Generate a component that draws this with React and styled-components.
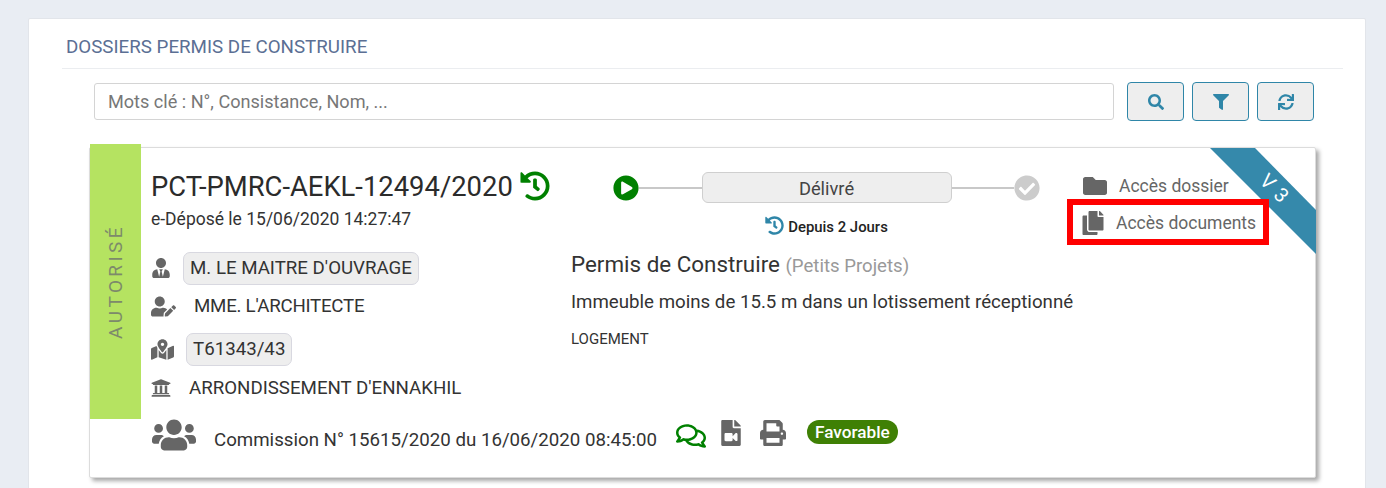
import React from 'react';
import styled, { createGlobalStyle } from 'styled-components';
import {
  FaSearch, FaFilter, FaSync, FaHistory, FaPlayCircle, FaCheckCircle, FaFolder, FaCopy,
  FaUserTie, FaUserEdit, FaMapMarkedAlt, FaUniversity, FaUsers, FaRegComments, FaFileVideo, FaPrint,
} from 'react-icons/fa';

const GlobalStyle = createGlobalStyle`
  html, body {
    margin: 0;
    height: 488px;
    overflow: hidden;
    background: #e9edf3;
    font-family: Roboto, "Liberation Sans", sans-serif;
    color: #333;
  }
`;

const Panel = styled.div`
  margin: 18px 20px 0 28px;
  height: 480px;
  background: #fff;
  border: 1px solid #e2e5ea;
  border-radius: 2px;
  box-sizing: border-box;
  padding: 0 22px 0 33px;
`;

const PanelTitle = styled.div`
  height: 50px;
  padding: 0 0 0 4px;
  line-height: 56px;
  box-sizing: border-box;
  border-bottom: 1px solid #ebedf0;
  font-size: 18.75px;
  color: #5b6f94;
`;

const SearchRow = styled.div`
  display: flex;
  align-items: center;
  margin: 13px 0 0 32px;
  height: 39px;
`;

const SearchInput = styled.input`
  width: 1020px;
  height: 37px;
  box-sizing: border-box;
  border: 1px solid #d4d4d4;
  border-radius: 3px;
  padding: 0 13px;
  margin-right: 13px;
  font: 18.1px Roboto, sans-serif;
  &::placeholder { color: #777; opacity: 1; }
`;

const IconButton = styled.button`
  width: 57px;
  height: 39px;
  margin-right: 8px;
  border: 1px solid #2f86a8;
  border-radius: 4px;
  background: #eeeeee;
  color: #2f86a8;
  font-size: 16px;
  display: flex;
  align-items: center;
  justify-content: center;
  padding: 0;
`;

const Card = styled.div`
  position: relative;
  margin: 26px 0 0 27px;
  width: 1227px;
  height: 331px;
  box-sizing: border-box;
  background: #fff;
  border: 1px solid #dcdcdc;
  border-radius: 2px;
  box-shadow: 3px 3px 4px rgba(0, 0, 0, 0.35);
`;

const CardTop = styled.div`
  display: flex;
  height: 270px;
`;

const StatusBar = styled.div`
  width: 51px;
  height: 275px;
  margin: -4px 10px 0 0;
  flex: none;
  background: #b5e361;
  color: #7d8a6b;
  font-size: 19px;
  letter-spacing: 3.4px;
  display: flex;
  align-items: center;
  justify-content: center;
  span { transform: rotate(-90deg); white-space: nowrap; }
`;

const LeftColumn = styled.div`
  width: 420px;
  flex: none;
`;

const DossierTitle = styled.div`
  display: flex;
  align-items: center;
  gap: 7px;
  margin-top: 20px;
  height: 38px;
  font-size: 27.4px;
  color: #2b2b2b;
  svg { color: #008000; font-size: 30px; margin-top: -3px; }
`;

const Deposit = styled.div`
  margin-top: 3px;
  font-size: 17.5px;
  color: #333;
`;

const InfoRow = styled.div`
  display: flex;
  align-items: center;
  height: ${p => p.$height}px;
  margin-top: ${p => p.$top || 0}px;
  font-size: 18.7px;
  letter-spacing: ${p => p.$tight ? '-0.25px' : 'normal'};
  color: #333;
`;

const InfoIcon = styled.span`
  width: ${p => p.$width}px;
  flex: none;
  display: flex;
  color: #666;
  font-size: ${p => p.$size || 20}px;
`;

const Tag = styled.span`
  padding: 5px 6px;
  line-height: 21px;
  background: #eeeeee;
  border: 1px solid #d8d8e0;
  border-radius: 7px;
`;

const RightColumn = styled.div`
  flex: 1;
`;

const RightTop = styled.div`
  display: flex;
  height: 103px;
`;

const Stepper = styled.div`
  margin: 24px 0 0 42px;
  width: 427px;
  flex: none;
`;

const StepLine = styled.div`
  display: flex;
  align-items: center;
  font-size: 26px;
  line-height: 0;
  svg { flex: none; }
`;

const Connector = styled.div`
  flex: 1;
  height: 2px;
  background: #c8c8c8;
`;

const StepBox = styled.div`
  width: 250px;
  height: 31px;
  box-sizing: border-box;
  border: 1px solid #cfcfcf;
  border-radius: 6px;
  background: #eeeeee;
  font-size: 18.3px;
  line-height: 31px;
  text-align: center;
  color: #444;
`;

const Since = styled.div`
  display: flex;
  align-items: center;
  justify-content: center;
  gap: 4px;
  margin-top: 15px;
  font-size: 14.9px;
  font-weight: 500;
  color: #222;
  svg { color: #2f86a8; font-size: 19px; margin-top: -3px; }
`;

const Links = styled.div`
  margin: 19px 0 0 43px;
`;

const AccessLink = styled.div`
  display: flex;
  align-items: center;
  height: 37px;
  font-size: 17.5px;
  color: #666;
  svg {
    flex: none;
    font-size: 24px;
    margin-left: ${p => p.$shift || 0}px;
    margin-right: ${p => p.$gap}px;
  }
`;

const Permit = styled.div`
  font-size: 22.4px;
  color: #333;
  small { font-size: 18.6px; color: #999; }
`;

const Description = styled.div`
  margin-top: 14px;
  font-size: 18.7px;
  color: #333;
`;

const Category = styled.div`
  margin-top: 17px;
  font-size: 15px;
  color: #333;
`;

const Ribbon = styled.div`
  position: absolute;
  top: 0;
  right: -1px;
  width: 106px;
  height: 106px;
  background: #3589ab;
  clip-path: polygon(0 0, 45px 0, 106px 62px, 106px 106px);
  color: #fff;
  font-size: 20px;
  span {
    position: absolute;
    left: 49px;
    top: 28px;
    transform: rotate(45deg);
    white-space: pre;
    word-spacing: 2px;
  }
`;

const Highlight = styled.div`
  position: absolute;
  left: 977px;
  top: 51px;
  width: 202px;
  height: 46px;
  box-sizing: border-box;
  border: 6px solid #ff0000;
`;

const CardFooter = styled.div`
  display: flex;
  align-items: flex-start;
  padding-left: 62px;
  height: 60px;
`;

const GroupIcon = styled.span`
  display: flex;
  font-size: 44px;
  color: #666;
  width: 62px;
  height: 34px;
  align-items: center;
`;

const CommissionText = styled.span`
  margin: 11px 19px 0 0;
  font-size: 18.7px;
  color: #333;
`;

const ActionIcon = styled.span`
  display: flex;
  font-size: ${p => p.$size}px;
  color: ${p => p.$color || '#666'};
  margin: ${p => p.$top}px ${p => p.$right}px 0 0;
`;

const Badge = styled.span`
  margin-top: 2px;
  height: 24px;
  line-height: 24px;
  padding: 0 8px;
  border-radius: 12px;
  background: #3f8005;
  color: #fff;
  font-size: 17.2px;
  font-weight: 500;
`;

export default function App() {
  return (
    <>
      <GlobalStyle />
      <Panel>
        <PanelTitle>DOSSIERS PERMIS DE CONSTRUIRE</PanelTitle>
        <SearchRow>
          <SearchInput placeholder="Mots clé : N°, Consistance, Nom, ..." />
          <IconButton><FaSearch /></IconButton>
          <IconButton><FaFilter /></IconButton>
          <IconButton><FaSync /></IconButton>
        </SearchRow>
        <Card>
          <Ribbon><span>V 3</span></Ribbon>
          <CardTop>
            <StatusBar><span>AUTORISÉ</span></StatusBar>
            <LeftColumn>
              <DossierTitle>PCT-PMRC-AEKL-12494/2020 <FaHistory /></DossierTitle>
              <Deposit>e-Déposé le 15/06/2020 14:27:47</Deposit>
              <InfoRow $height={34} $top={22}>
                <InfoIcon $width={32}><FaUserTie /></InfoIcon>
                <Tag>M. LE MAITRE D'OUVRAGE</Tag>
              </InfoRow>
              <InfoRow $height={38} $top={2} $tight>
                <InfoIcon $width={43} $size={25}><FaUserEdit /></InfoIcon>
                MME. L'ARCHITECTE
              </InfoRow>
              <InfoRow $height={34} $top={7}>
                <InfoIcon $width={35} $size={23}><FaMapMarkedAlt /></InfoIcon>
                <Tag>T61343/43</Tag>
              </InfoRow>
              <InfoRow $height={38} $top={3}>
                <InfoIcon $width={38}><FaUniversity /></InfoIcon>
                ARRONDISSEMENT D'ENNAKHIL
              </InfoRow>
            </LeftColumn>
            <RightColumn>
              <RightTop>
                <Stepper>
                  <StepLine>
                    <FaPlayCircle color="#008000" />
                    <Connector />
                    <StepBox>Délivré</StepBox>
                    <Connector />
                    <FaCheckCircle color="#cccccc" />
                  </StepLine>
                  <Since><FaHistory /> Depuis 2 Jours</Since>
                </Stepper>
                <Links>
                  <AccessLink $gap={12}><FaFolder />Accès dossier</AccessLink>
                  <AccessLink $shift={-2} $gap={11}><FaCopy />Accès documents</AccessLink>
                </Links>
              </RightTop>
              <Permit>Permis de Construire <small>(Petits Projets)</small></Permit>
              <Description>Immeuble moins de 15.5 m dans un lotissement réceptionné</Description>
              <Category>LOGEMENT</Category>
            </RightColumn>
          </CardTop>
          <Highlight />
          <CardFooter>
            <GroupIcon><FaUsers /></GroupIcon>
            <CommissionText>Commission N° 15615/2020 du 16/06/2020 08:45:00</CommissionText>
            <ActionIcon $size={30} $color="#008000" $top={3} $right={12}><FaRegComments /></ActionIcon>
            <ActionIcon $size={26} $top={2} $right={16}><FaFileVideo /></ActionIcon>
            <ActionIcon $size={26} $top={2} $right={21}><FaPrint /></ActionIcon>
            <Badge>Favorable</Badge>
          </CardFooter>
        </Card>
      </Panel>
    </>
  );
}
